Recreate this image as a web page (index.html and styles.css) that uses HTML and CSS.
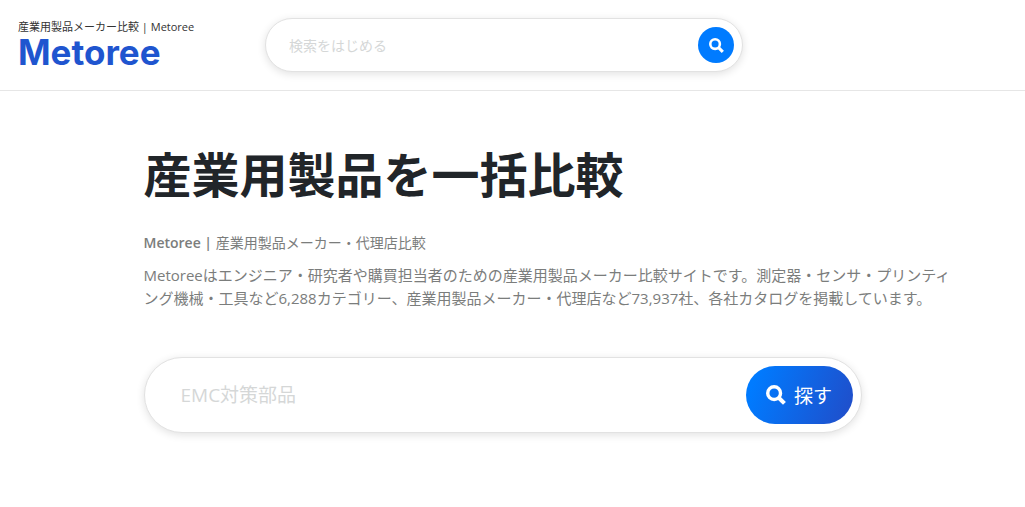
FILE: index.html
```html
<!DOCTYPE html>
<html lang="ja">
<head>
    <meta charset="UTF-8">
    <meta name="viewport" content="width=device-width, initial-scale=1.0">
    <title>産業用製品メーカー比較 | Metoree</title>
    <link rel="stylesheet" href="styles.css">
</head>
<body>

    <header class="header">
        <div class="brand">
            <p class="brand-text">産業用製品メーカー比較 | Metoree</p>
            <a class="logo" href="/">Metoree</a>
        </div>
        <form class="search search-small" role="search">
            <input type="text" class="search-input" placeholder="検索をはじめる" aria-label="検索">
            <button type="submit" class="search-button" aria-label="検索する">
                <svg class="icon" viewBox="0 0 512 512" fill="none" stroke="currentColor" aria-hidden="true">
                    <circle cx="208" cy="208" r="164" stroke-width="88"/>
                    <path d="M326 326L472 472" stroke-width="104"/>
                </svg>
            </button>
        </form>
    </header>

    <main class="container">
        <h1>産業用製品を一括比較</h1>
        <h2><strong>Metoree |</strong> 産業用製品メーカー・代理店比較</h2>
        <p class="lead">Metoreeはエンジニア・研究者や購買担当者のための産業用製品メーカー比較サイトです。測定器・センサ・プリンティング機械・工具など6,288カテゴリー、産業用製品メーカー・代理店など73,937社、各社カタログを掲載しています。</p>

        <form class="search search-large" role="search">
            <input type="text" class="search-input" placeholder="EMC対策部品" aria-label="製品を検索">
            <button type="submit" class="search-button">
                <svg class="icon" viewBox="0 0 512 512" fill="none" stroke="currentColor" aria-hidden="true">
                    <circle cx="208" cy="208" r="164" stroke-width="88"/>
                    <path d="M326 326L472 472" stroke-width="104"/>
                </svg>
                探す
            </button>
        </form>
    </main>

</body>
</html>
```
FILE: styles.css
```css
* {
    box-sizing: border-box;
}
body {
    margin: 0;
    font-family: "Open Sans", "Noto Sans CJK JP", sans-serif;
    color: #212529;
    background-color: #fff;
}
.header {
    display: flex;
    align-items: center;
    padding: 18px;
    border-bottom: 1px solid #e6e6e6;
}
.brand {
    flex: 0 0 247px;
}
.brand-text {
    margin: 0;
    font-size: 11px;
    line-height: 14px;
    color: #333;
}
.logo {
    display: block;
    font-family: Inter, sans-serif;
    font-size: 35px;
    font-weight: 700;
    line-height: 36px;
    color: #1f55cf;
    text-decoration: none;
}
.search {
    display: flex;
    align-items: center;
    background: #fff;
    border: 1px solid #e2e2e2;
    border-radius: 40px;
    box-shadow: 0 2px 8px rgba(0, 0, 0, 0.12);
}
.search-input {
    flex: 1;
    min-width: 0;
    padding: 0;
    border: none;
    outline: none;
    background: none;
    font-family: inherit;
}
.search-input::placeholder {
    color: #d5d7d7;
    opacity: 1;
}
.search-button {
    display: flex;
    align-items: center;
    justify-content: center;
    border: none;
    color: #fff;
    font-family: inherit;
    cursor: pointer;
}
.search-small {
    flex: 0 1 478px;
    height: 54px;
    padding: 0 8px 0 23px;
}
.search-small .search-input {
    font-size: 14px;
}
.search-small .search-button {
    width: 36px;
    height: 36px;
    padding: 0;
    border-radius: 50%;
    background: #007bff;
}
.search-small .icon {
    width: 15px;
    height: 15px;
}
.container {
    margin: 0 6% 0 14%;
    padding: 48px 0;
}
h1 {
    margin: 0 0 21px;
    font-size: 48px;
    font-weight: 700;
    line-height: 72px;
}
h2 {
    margin: 0 0 10px;
    font-size: 14px;
    font-weight: 400;
    line-height: 22px;
    color: #7b7d7c;
}
h2 strong {
    font-weight: 600;
}
.lead {
    margin: 0 0 47px;
    font-size: 15px;
    line-height: 23px;
    color: #7b7d7c;
}
.search-large {
    max-width: 718px;
    height: 76px;
    padding: 0 8px 0 36px;
}
.search-large .search-input {
    font-size: 19px;
}
.search-large .search-button {
    gap: 8px;
    width: 107px;
    height: 58px;
    padding: 0;
    border-radius: 29px;
    background: linear-gradient(110deg, #007bff 10%, #1f4fcb 95%);
    font-size: 19px;
}
.search-large .icon {
    width: 20px;
    height: 20px;
}
```
